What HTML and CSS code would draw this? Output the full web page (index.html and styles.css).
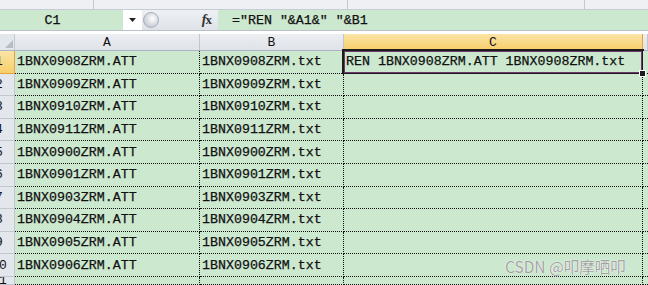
FILE: index.html
```html
<!DOCTYPE html>
<html lang="en">
<head>
    <meta charset="UTF-8">
    <title>Sheet1</title>
    <link rel="stylesheet" href="styles.css">
</head>
<body>
    <div class="ribbon-edge">
        <span class="sep sep-1"></span>
        <span class="sep sep-2"></span>
        <span class="sep sep-3"></span>
    </div>

    <div class="formula-bar">
        <div class="name-box">C1</div>
        <div class="name-drop">
            <svg width="7" height="4" viewBox="0 0 7 4"><path d="M0 0h7L3.5 4z" fill="#222"/></svg>
        </div>
        <div class="bar-tools">
            <span class="knob"></span>
            <span class="fx"><i>f</i>x</span>
        </div>
        <div class="formula">="REN "&amp;A1&amp;" "&amp;B1</div>
    </div>

    <div class="sheet" id="sheet">
        <div class="corner"><span class="tri"></span></div>
        <div class="col-head">A</div>
        <div class="col-head">B</div>
        <div class="col-head active">C</div>
        <div class="col-head last"></div>
    </div>

    <div class="watermark">CSDN @叩摩哂叩</div>

    <script>
        // rows of the sheet: column A and column B
        const rows = [
            ['1BNX0908ZRM.ATT', '1BNX0908ZRM.txt'],
            ['1BNX0909ZRM.ATT', '1BNX0909ZRM.txt'],
            ['1BNX0910ZRM.ATT', '1BNX0910ZRM.txt'],
            ['1BNX0911ZRM.ATT', '1BNX0911ZRM.txt'],
            ['1BNX0900ZRM.ATT', '1BNX0900ZRM.txt'],
            ['1BNX0901ZRM.ATT', '1BNX0901ZRM.txt'],
            ['1BNX0903ZRM.ATT', '1BNX0903ZRM.txt'],
            ['1BNX0904ZRM.ATT', '1BNX0904ZRM.txt'],
            ['1BNX0905ZRM.ATT', '1BNX0905ZRM.txt'],
            ['1BNX0906ZRM.ATT', '1BNX0906ZRM.txt'],
            ['', '']
        ];

        const sheet = document.getElementById('sheet');
        rows.forEach((r, i) => {
            const n = i + 1;
            const c = n === 1 ? 'REN ' + r[0] + ' ' + r[1] : '';
            sheet.insertAdjacentHTML('beforeend', `
                <div class="row-head${n === 1 ? ' active' : ''}"><span>${n}</span></div>
                <div class="cell">${r[0]}</div>
                <div class="cell">${r[1]}</div>
                <div class="cell${n === 1 ? ' selected' : ''}">${c}</div>
                <div class="cell last"></div>
            `);
        });
    </script>
</body>
</html>
```

FILE: styles.css
```css
body {
    margin: 0;
    width: 648px;
    height: 285px;
    overflow: hidden;
    position: relative;
    background: #fff;
    font-family: "Liberation Mono", monospace;
    font-size: 13.3px;
    color: #111;
    -webkit-text-stroke: 0.25px #111;
}

.ribbon-edge {
    height: 9px;
    background: #eef0f4;
    border-bottom: 1px solid #c6ccd6;
    position: relative;
}

.ribbon-edge .sep {
    position: absolute;
    top: 0;
    width: 1px;
    height: 9px;
    background: #c3c8d0;
}

.sep-1 { left: 93px; }
.sep-2 { left: 347px; }
.sep-3 { left: 584px; }

.formula-bar {
    display: flex;
    height: 20px;
    background: #dfe3e9;
    border-bottom: 1px solid #b9c0ca;
}

.name-box {
    width: 123px;
    background: #cce8cf;
    display: flex;
    align-items: center;
    justify-content: center;
    padding-right: 18px;
    box-sizing: border-box;
}

.name-drop {
    width: 19px;
    background: #fff;
    display: flex;
    align-items: center;
    justify-content: center;
}

.bar-tools {
    width: 76px;
    display: flex;
    align-items: center;
    justify-content: space-between;
    background: linear-gradient(#eef0f4, #dfe3e8);
    padding-right: 6px;
    box-sizing: border-box;
}

.knob {
    width: 14px;
    height: 14px;
    margin-left: 1px;
    border-radius: 50%;
    background: radial-gradient(circle at 60% 40%, #fff, #c9ced6 70%);
    border: 1px solid #a9b0ba;
}

.fx {
    font-family: "Liberation Serif", serif;
    font-weight: bold;
    font-size: 13px;
    color: #333;
    -webkit-text-stroke: 0;
}

.fx i {
    font-size: 14px;
    margin-right: -1px;
}

.formula {
    flex: 1;
    background: #cce8cf;
    display: flex;
    align-items: center;
    padding-left: 14px;
}

.sheet {
    margin-top: 3px;
    display: grid;
    grid-template-columns: 15px 185px 144px 299px 1fr;
    grid-template-rows: 17px repeat(10, 22.6px) 8px;
}

.corner {
    background: #e3e6eb;
    border-right: 1px solid #c2c7cf;
    border-bottom: 1px solid #aab3bf;
    position: relative;
}

.corner .tri {
    position: absolute;
    right: 1px;
    bottom: 2px;
    width: 0;
    height: 0;
    border-left: 8px solid transparent;
    border-bottom: 8px solid #b6bcc6;
}

.col-head {
    background: linear-gradient(#eceef2, #dfe2e7);
    border-right: 1px solid #c2c7cf;
    border-bottom: 1px solid #aab3bf;
    display: flex;
    align-items: center;
    justify-content: center;
    font-size: 13px;
    -webkit-text-stroke: 0;
}

.col-head.active,
.row-head.active {
    background: linear-gradient(#fbe4a6, #f7cf6a);
    border-color: #e7a13f;
}

.row-head {
    background: #e3e6eb;
    border-right: 1px solid #c2c7cf;
    border-bottom: 1px solid #c2c7cf;
    overflow: hidden;
    display: flex;
    align-items: center;
    font-size: 13px;
    -webkit-text-stroke: 0;
}

.row-head span {
    flex: none;
    width: 30px;
    margin-left: -16px;
    text-align: center;
}

.cell {
    background: #cce8cf;
    border-right: 1px dotted #111;
    border-bottom: 1px dotted #111;
    display: flex;
    align-items: center;
    padding-left: 2px;
    white-space: nowrap;
    position: relative;
}

.cell.last {
    border-right: none;
}

.cell.selected::after {
    content: "";
    position: absolute;
    left: -2px;
    top: -2px;
    right: -2px;
    bottom: -2px;
    border: 2px solid #1c1c1c;
    box-shadow: inset 0 0 0 1px #6b3a6b;
}

.cell.selected::before {
    content: "";
    position: absolute;
    right: -4px;
    bottom: -4px;
    width: 5px;
    height: 5px;
    background: #1c1c1c;
    border: 1px solid #fff;
    z-index: 1;
}

.watermark {
    position: absolute;
    left: 505px;
    top: 255px;
    font-family: "Noto Sans CJK SC", sans-serif;
    font-size: 15.5px;
    color: #a2a2a2;
    -webkit-text-stroke: 0;
    text-shadow: 0 0 1px #fff, 0 0 1px #fff;
}
```
